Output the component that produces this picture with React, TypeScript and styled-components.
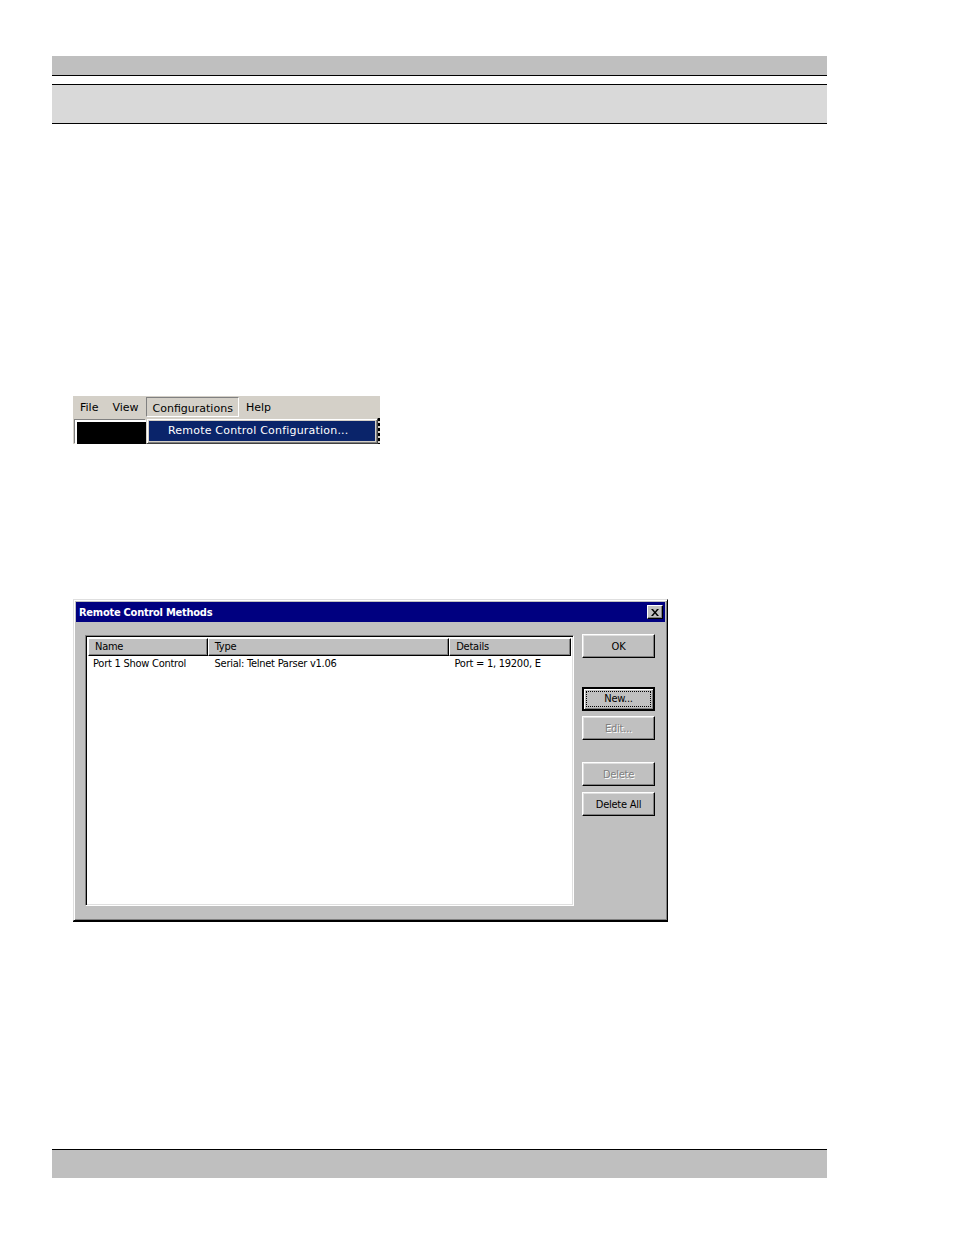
import styled, { createGlobalStyle } from 'styled-components';

const GlobalStyle = createGlobalStyle`
	body {
		margin: 0;
		background: #ffffff;
		font-family: 'Liberation Sans', Arial, sans-serif;
	}
`;

const rows = [
	{ name: 'Port 1 Show Control', type: 'Serial: Telnet Parser v1.06', details: 'Port = 1, 19200, E' },
];

const App = (): JSX.Element => {
	return (
		<Page>
			<GlobalStyle />
			<Header>
				<TopBar />
				<SubBar />
			</Header>

			<MenuShot>
				<MenuBar>
					<MenuItem>File</MenuItem>
					<MenuItem>View</MenuItem>
					<MenuItem open>Configurations</MenuItem>
					<MenuItem>Help</MenuItem>
				</MenuBar>
				<MenuBelow>
					<BlackPane />
				</MenuBelow>
				<Dropdown>
					<DropdownItem>Remote Control Configuration...</DropdownItem>
				</Dropdown>
				<EdgeMark />
			</MenuShot>

			<Dialog>
				<TitleBar>
					<TitleText>Remote Control Methods</TitleText>
					<CloseButton>
						<svg width="8" height="7" viewBox="0 0 8 7">
							<path d="M0 0h2l2 2.5L6 0h2L5 3.5 8 7H6L4 4.5 2 7H0l3-3.5z" fill="#000" />
						</svg>
					</CloseButton>
				</TitleBar>
				<DialogBody>
					<ListView>
						<ListHeader>
							<HeaderCell width={120}>Name</HeaderCell>
							<HeaderCell width={242}>Type</HeaderCell>
							<HeaderCell width={122}>Details</HeaderCell>
						</ListHeader>
						{rows.map((r) => (
							<ListRow key={r.name}>
								<Cell width={122}>{r.name}</Cell>
								<Cell width={241}>{r.type}</Cell>
								<Cell width={122}>{r.details}</Cell>
							</ListRow>
						))}
					</ListView>
					<ButtonColumn>
						<Button>OK</Button>
						<Button isDefault gap={29}>
							<Focus>New...</Focus>
						</Button>
						<Button disabled gap={5}>Edit...</Button>
						<Button disabled gap={22}>Delete</Button>
						<Button gap={6}>Delete All</Button>
					</ButtonColumn>
				</DialogBody>
			</Dialog>

			<Footer />
		</Page>
	);
};

export default App;

const Page = styled.div`
	position: relative;
	width: 954px;
	height: 1235px;
	padding: 56px 0 0 52px;
	box-sizing: border-box;
	display: flex;
	flex-direction: column;
`;

const Header = styled.div`
	width: 775px;
	display: flex;
	flex-direction: column;
	gap: 8px;
`;

const TopBar = styled.div`
	height: 19px;
	background: #bfbfbf;
	border-bottom: 1px solid #000;
`;

const SubBar = styled.div`
	height: 38px;
	background: #d9d9d9;
	border-top: 1px solid #000;
	border-bottom: 1px solid #000;
`;

const MenuShot = styled.div`
	position: relative;
	margin: 272px 0 0 21px;
	width: 307px;
	height: 48px;
	background: #d4d0c8;
	font-family: 'DejaVu Sans', Tahoma, sans-serif;
	font-size: 11px;
`;

const MenuBar = styled.div`
	height: 22px;
	display: flex;
	align-items: center;
`;

const MenuItem = styled.div<{ open?: boolean }>`
	height: 20px;
	line-height: 20px;
	padding: 0 6px;
	color: #000;
	box-sizing: border-box;
	border: 1px solid transparent;
	${(p) =>
		p.open &&
		`
		padding: 1px 5px 0 6px;
		border-color: #808080 #ffffff #ffffff #808080;
	`}
`;

const MenuBelow = styled.div`
	height: 26px;
	padding: 2px 0 0 2px;
	box-sizing: border-box;
`;

const BlackPane = styled.div`
	width: 71px;
	height: 24px;
	background: #000;
	box-sizing: border-box;
	border-top: 2px solid #ffffff;
	border-left: 2px solid #ffffff;
	box-shadow: -1px -1px 0 #808080;
`;

const Dropdown = styled.div`
	position: absolute;
	left: 73px;
	top: 22px;
	width: 232px;
	height: 26px;
	background: #d4d0c8;
	box-sizing: border-box;
	border: 1px solid;
	border-color: #d4d0c8 #404040 #404040 #d4d0c8;
	box-shadow: inset 1px 1px 0 #ffffff, inset -1px -1px 0 #808080;
	padding: 2px;
`;

const DropdownItem = styled.div`
	height: 20px;
	line-height: 20px;
	background: #0a246a;
	color: #ffffff;
	padding-left: 19px;
	letter-spacing: 0.2px;
`;

const EdgeMark = styled.div`
	position: absolute;
	right: 0;
	top: 22px;
	width: 2px;
	height: 26px;
	background: repeating-linear-gradient(#000 0 3px, #d4d0c8 3px 5px);
`;

const Dialog = styled.div`
	margin: 155px 0 0 21px;
	width: 595px;
	height: 322px;
	box-sizing: border-box;
	background: #c0c0c0;
	border: 1px solid;
	border-color: #dfdfdf #000000 #000000 #dfdfdf;
	box-shadow: inset 1px 1px 0 #ffffff, inset -1px -1px 0 #808080, 0 1px 0 #000;
	padding: 2px;
	font-family: 'DejaVu Sans Condensed', 'Liberation Sans', sans-serif;
	font-size: 11px;
	letter-spacing: -0.25px;
`;

const TitleBar = styled.div`
	height: 20px;
	background: #000080;
	display: flex;
	align-items: center;
	justify-content: space-between;
	padding: 0 2px 0 3px;
`;

const TitleText = styled.span`
	color: #ffffff;
	font-weight: bold;
	font-size: 11px;
`;

const CloseButton = styled.div`
	width: 16px;
	height: 14px;
	box-sizing: border-box;
	background: #c0c0c0;
	display: flex;
	align-items: center;
	justify-content: center;
	border: 1px solid;
	border-color: #ffffff #000000 #000000 #ffffff;
	box-shadow: inset -1px -1px 0 #808080;
`;

const DialogBody = styled.div`
	display: flex;
	gap: 8px;
	padding: 13px 0 0 9px;
`;

const ListView = styled.div`
	width: 489px;
	height: 271px;
	box-sizing: border-box;
	background: #ffffff;
	border: 1px solid;
	border-color: #808080 #ffffff #ffffff #808080;
	box-shadow: inset 1px 1px 0 #000000, inset -1px -1px 0 #dfdfdf;
	padding: 2px;
`;

const ListHeader = styled.div`
	display: flex;
	height: 18px;
`;

const HeaderCell = styled.div<{ width: number }>`
	width: ${(p) => p.width}px;
	box-sizing: border-box;
	background: #c0c0c0;
	border: 1px solid;
	border-color: #ffffff #000000 #000000 #ffffff;
	box-shadow: inset -1px -1px 0 #808080;
	padding-left: 6px;
	line-height: 16px;
	color: #000;
`;

const ListRow = styled.div`
	display: flex;
	height: 16px;
	line-height: 16px;
`;

const Cell = styled.div<{ width: number }>`
	width: ${(p) => p.width}px;
	padding-left: 5px;
	box-sizing: border-box;
	white-space: nowrap;
	overflow: hidden;
	color: #000;
`;

const ButtonColumn = styled.div`
	display: flex;
	flex-direction: column;
	margin-top: -1px;
`;

const Button = styled.button<{ isDefault?: boolean; gap?: number }>`
	width: 73px;
	height: 24px;
	margin-top: ${(p) => p.gap ?? 0}px;
	box-sizing: border-box;
	background: #c0c0c0;
	font-family: inherit;
	font-size: 11px;
	letter-spacing: inherit;
	color: #000;
	padding: 0;
	border: 1px solid;
	border-color: #ffffff #000000 #000000 #ffffff;
	box-shadow: inset -1px -1px 0 #808080, inset 1px 1px 0 #dfdfdf;
	display: flex;
	align-items: center;
	justify-content: center;

	${(p) =>
		p.isDefault &&
		`
		border: 2px solid #000;
		border-color: #000;
		box-shadow: inset 1px 1px 0 #ffffff, inset -1px -1px 0 #808080;
	`}

	&:disabled {
		color: #808080;
		text-shadow: 1px 1px 0 #ffffff;
	}
`;

const Focus = styled.span`
	width: 63px;
	height: 14px;
	line-height: 14px;
	border: 1px dotted #000;
	display: flex;
	align-items: center;
	justify-content: center;
`;

const Footer = styled.div`
	margin-top: 228px;
	width: 775px;
	height: 28px;
	background: #bfbfbf;
	border-top: 1px solid #000;
`;
